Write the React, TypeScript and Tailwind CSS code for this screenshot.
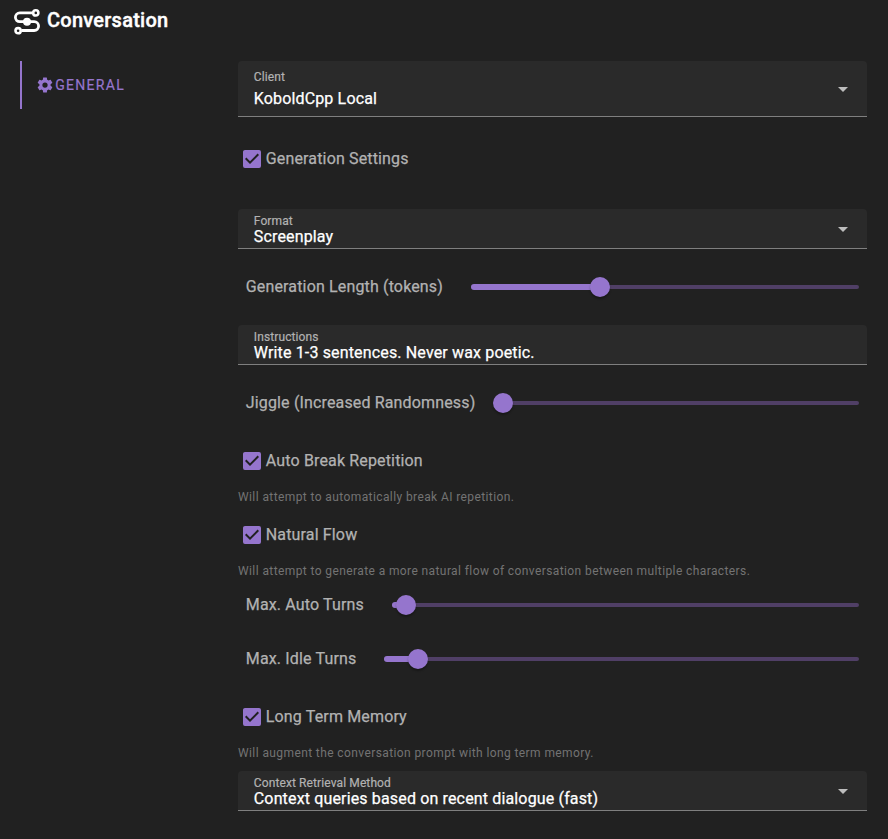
import React from "react";

function FlowIcon() {
  return (
    <svg className="h-[26px] w-[26px] shrink-0" viewBox="0 0 26 26" fill="none" stroke="#fff">
      <path d="M18.5 3.9H5.8a4.4 4.4 0 0 0 0 8.8h14.4a4.4 4.4 0 0 1 0 8.8H7.5" strokeWidth="2.8" />
      <circle cx="21.8" cy="3.9" r="2.6" strokeWidth="2.6" />
      <circle cx="4.1" cy="21.7" r="2.6" strokeWidth="2.6" />
      <circle cx="13" cy="12.7" r="4" fill="#fff" stroke="none" />
    </svg>
  );
}

function CogIcon() {
  return (
    <svg className="h-[18px] w-[18px] shrink-0" viewBox="0 0 24 24" fill="currentColor">
      <path d="M12 15.5A3.5 3.5 0 0 1 8.5 12A3.5 3.5 0 0 1 12 8.5a3.5 3.5 0 0 1 3.5 3.5a3.5 3.5 0 0 1-3.5 3.5m7.43-2.53c.04-.32.07-.64.07-.97s-.03-.66-.07-1l2.11-1.63c.19-.15.24-.42.12-.64l-2-3.46c-.12-.22-.39-.31-.61-.22l-2.49 1c-.52-.39-1.06-.73-1.69-.98l-.37-2.65A.506.506 0 0 0 14 2h-4c-.25 0-.46.18-.5.42l-.37 2.65c-.63.25-1.17.59-1.69.98l-2.49-1c-.22-.09-.49 0-.61.22l-2 3.46c-.13.22-.07.49.12.64L4.57 11c-.04.34-.07.67-.07 1s.03.65.07.97l-2.11 1.66c-.19.15-.25.42-.12.64l2 3.46c.12.22.39.3.61.22l2.49-1.01c.52.4 1.06.74 1.69.99l.37 2.65c.04.24.25.42.5.42h4c.25 0 .46-.18.5-.42l.37-2.65c.63-.26 1.17-.59 1.69-.99l2.49 1.01c.22.08.49 0 .61-.22l2-3.46c.12-.22.07-.49-.12-.64z" />
    </svg>
  );
}

function CheckboxIcon() {
  return (
    <svg className="h-6 w-6 shrink-0" viewBox="0 0 24 24" fill="#9575cd">
      <path d="M10 17l-5-5l1.41-1.42L10 14.17l7.59-7.59L19 8m0-5H5c-1.11 0-2 .89-2 2v14a2 2 0 0 0 2 2h14a2 2 0 0 0 2-2V5a2 2 0 0 0-2-2" />
    </svg>
  );
}

function Field({ label, value, tall, select }: { label: string; value: string; tall?: boolean; select?: boolean }) {
  return (
    <div
      className={`flex items-center justify-between rounded-t border-b border-[#7f7f7f] bg-[#2a2a2a] pr-3 pl-[15.8px] ${tall ? "h-14" : "h-10"}`}
    >
      <div className={`flex flex-col ${tall ? "gap-[6px] pb-[2px]" : "pt-px"}`}>
        <span className="text-xs leading-4 tracking-[0.11px] text-[#b2b2b2] [-webkit-text-stroke:0.2px]">{label}</span>
        <span className="text-base leading-4 tracking-[0.15px] text-white [-webkit-text-stroke:0.25px]">{value}</span>
      </div>
      {select && (
        <svg className="h-6 w-6" viewBox="0 0 24 24" fill="#bdbdbd">
          <path d="M7 10l5 5l5-5z" />
        </svg>
      )}
    </div>
  );
}

function Check({ label }: { label: string }) {
  return (
    <div className="flex h-10 items-center pl-[2px] text-[#b2b2b2]">
      <CheckboxIcon />
      <span className="pl-[1.8px] text-base leading-6 tracking-[0.15px] [-webkit-text-stroke:0.25px]">{label}</span>
    </div>
  );
}

function SliderRow({ label, width, fill }: { label: string; width: string; fill: number }) {
  return (
    <div className="flex h-8 items-center justify-between pr-2 pl-[7.8px]">
      <span className="text-base leading-6 tracking-[0.15px] text-[#b2b2b2] [-webkit-text-stroke:0.25px]">{label}</span>
      <div className={`relative h-1 rounded-full bg-[#503f66] ${width}`}>
        <div className="absolute -top-px left-0 h-1.5 rounded-full bg-[#9575cd]" style={{ width: fill }} />
        <div
          className="absolute -top-2 h-5 w-5 rounded-full bg-[#9575cd] shadow-[0_2px_2px_rgba(0,0,0,0.3)]"
          style={{ left: fill - 10 }}
        />
      </div>
    </div>
  );
}

function Hint({ children }: { children: React.ReactNode }) {
  return <p className="h-5 text-xs leading-5 tracking-[0.4px] text-[#737373]">{children}</p>;
}

export default function App() {
  return (
    <div className="h-[839px] w-[888px] overflow-hidden bg-[#212121] font-[Roboto,sans-serif]">
      <header className="flex h-[45px] items-start gap-[7px] pt-[9px] pl-[14px]">
        <FlowIcon />
        <h1 className="-mt-1 text-xl leading-[30px] font-medium tracking-[0.25px] text-white [-webkit-text-stroke:0.4px]">
          Conversation
        </h1>
      </header>
      <div className="flex pt-4 pl-5">
        <nav className="w-[218px] shrink-0">
          <div className="flex h-12 items-center border-l-2 border-[#9575cd] pl-[14px] text-[#9575cd]">
            <CogIcon />
            <span className="pl-[1.2px] text-sm font-normal tracking-[1.3px] uppercase [-webkit-text-stroke:0.2px]">
              General
            </span>
          </div>
        </nav>
        <main className="flex w-[629px] flex-col">
          <Field label="Client" value="KoboldCpp Local" tall select />
          <div className="mt-[22px]"><Check label="Generation Settings" /></div>
          <div className="mt-[30px]"><Field label="Format" value="Screenplay" select /></div>
          <div className="mt-[22px]"><SliderRow label="Generation Length (tokens)" width="w-[388px]" fill={129} /></div>
          <div className="mt-[22px]"><Field label="Instructions" value="Write 1-3 sentences. Never wax poetic." /></div>
          <div className="mt-[22px]"><SliderRow label="Jiggle (Increased Randomness)" width="w-[356px]" fill={0} /></div>
          <div className="mt-[22px]"><Check label="Auto Break Repetition" /></div>
          <div className="mt-1.5"><Hint>Will attempt to automatically break AI repetition.</Hint></div>
          <div className="mt-2"><Check label="Natural Flow" /></div>
          <div className="mt-1.5"><Hint>Will attempt to generate a more natural flow of conversation between multiple characters.</Hint></div>
          <div className="mt-2"><SliderRow label="Max. Auto Turns" width="w-[467px]" fill={14} /></div>
          <div className="mt-[22px]"><SliderRow label="Max. Idle Turns" width="w-[475px]" fill={34} /></div>
          <div className="mt-[22px]"><Check label="Long Term Memory" /></div>
          <div className="mt-1.5"><Hint>Will augment the conversation prompt with long term memory.</Hint></div>
          <div className="mt-2"><Field label="Context Retrieval Method" value="Context queries based on recent dialogue (fast)" select /></div>
        </main>
      </div>
    </div>
  );
}
